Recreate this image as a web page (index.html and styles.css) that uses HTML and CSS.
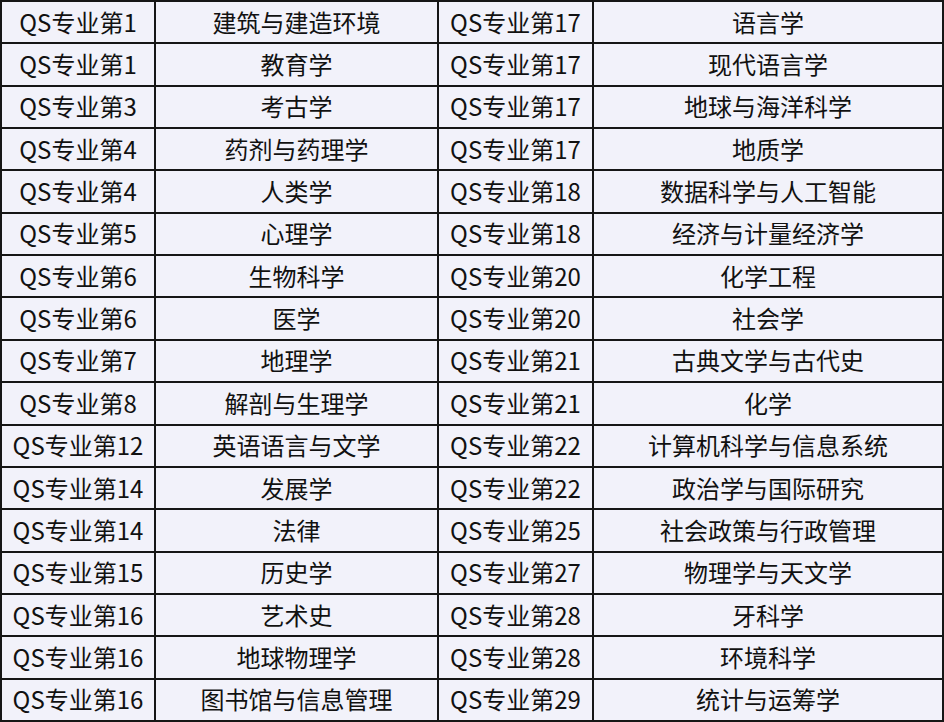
FILE: index.html
```html
<!DOCTYPE html>
<html lang="zh-CN">
<head>
<meta charset="utf-8">
<link rel="stylesheet" href="styles.css">
</head>
<body>
<div class="table">
<div class="cell">QS专业第1</div><div class="cell">建筑与建造环境</div><div class="cell">QS专业第17</div><div class="cell">语言学</div>
<div class="cell">QS专业第1</div><div class="cell">教育学</div><div class="cell">QS专业第17</div><div class="cell">现代语言学</div>
<div class="cell">QS专业第3</div><div class="cell">考古学</div><div class="cell">QS专业第17</div><div class="cell">地球与海洋科学</div>
<div class="cell">QS专业第4</div><div class="cell">药剂与药理学</div><div class="cell">QS专业第17</div><div class="cell">地质学</div>
<div class="cell">QS专业第4</div><div class="cell">人类学</div><div class="cell">QS专业第18</div><div class="cell">数据科学与人工智能</div>
<div class="cell">QS专业第5</div><div class="cell">心理学</div><div class="cell">QS专业第18</div><div class="cell">经济与计量经济学</div>
<div class="cell">QS专业第6</div><div class="cell">生物科学</div><div class="cell">QS专业第20</div><div class="cell">化学工程</div>
<div class="cell">QS专业第6</div><div class="cell">医学</div><div class="cell">QS专业第20</div><div class="cell">社会学</div>
<div class="cell">QS专业第7</div><div class="cell">地理学</div><div class="cell">QS专业第21</div><div class="cell">古典文学与古代史</div>
<div class="cell">QS专业第8</div><div class="cell">解剖与生理学</div><div class="cell">QS专业第21</div><div class="cell">化学</div>
<div class="cell">QS专业第12</div><div class="cell">英语语言与文学</div><div class="cell">QS专业第22</div><div class="cell">计算机科学与信息系统</div>
<div class="cell">QS专业第14</div><div class="cell">发展学</div><div class="cell">QS专业第22</div><div class="cell">政治学与国际研究</div>
<div class="cell">QS专业第14</div><div class="cell">法律</div><div class="cell">QS专业第25</div><div class="cell">社会政策与行政管理</div>
<div class="cell">QS专业第15</div><div class="cell">历史学</div><div class="cell">QS专业第27</div><div class="cell">物理学与天文学</div>
<div class="cell">QS专业第16</div><div class="cell">艺术史</div><div class="cell">QS专业第28</div><div class="cell">牙科学</div>
<div class="cell">QS专业第16</div><div class="cell">地球物理学</div><div class="cell">QS专业第28</div><div class="cell">环境科学</div>
<div class="cell">QS专业第16</div><div class="cell">图书馆与信息管理</div><div class="cell">QS专业第29</div><div class="cell">统计与运筹学</div>
</div>
</body>
</html>
```
FILE: styles.css
```css
html, body {
  margin: 0;
  padding: 0;
  background: #ffffff;
}
.table {
  box-sizing: border-box;
  width: 944px;
  height: 722px;
  padding: 2px;
  background: #161616;
  display: grid;
  grid-template-columns: 152px 281px 153px 1fr;
  grid-template-rows: repeat(17, 1fr);
  gap: 2px;
}
.cell {
  background: #f2f2fa;
  color: #111111;
  font-family: "Noto Sans CJK SC", "Noto Sans", sans-serif;
  font-size: 24px;
  line-height: 1;
  padding-bottom: 1px;
  display: flex;
  align-items: center;
  justify-content: center;
  white-space: nowrap;
}
```
